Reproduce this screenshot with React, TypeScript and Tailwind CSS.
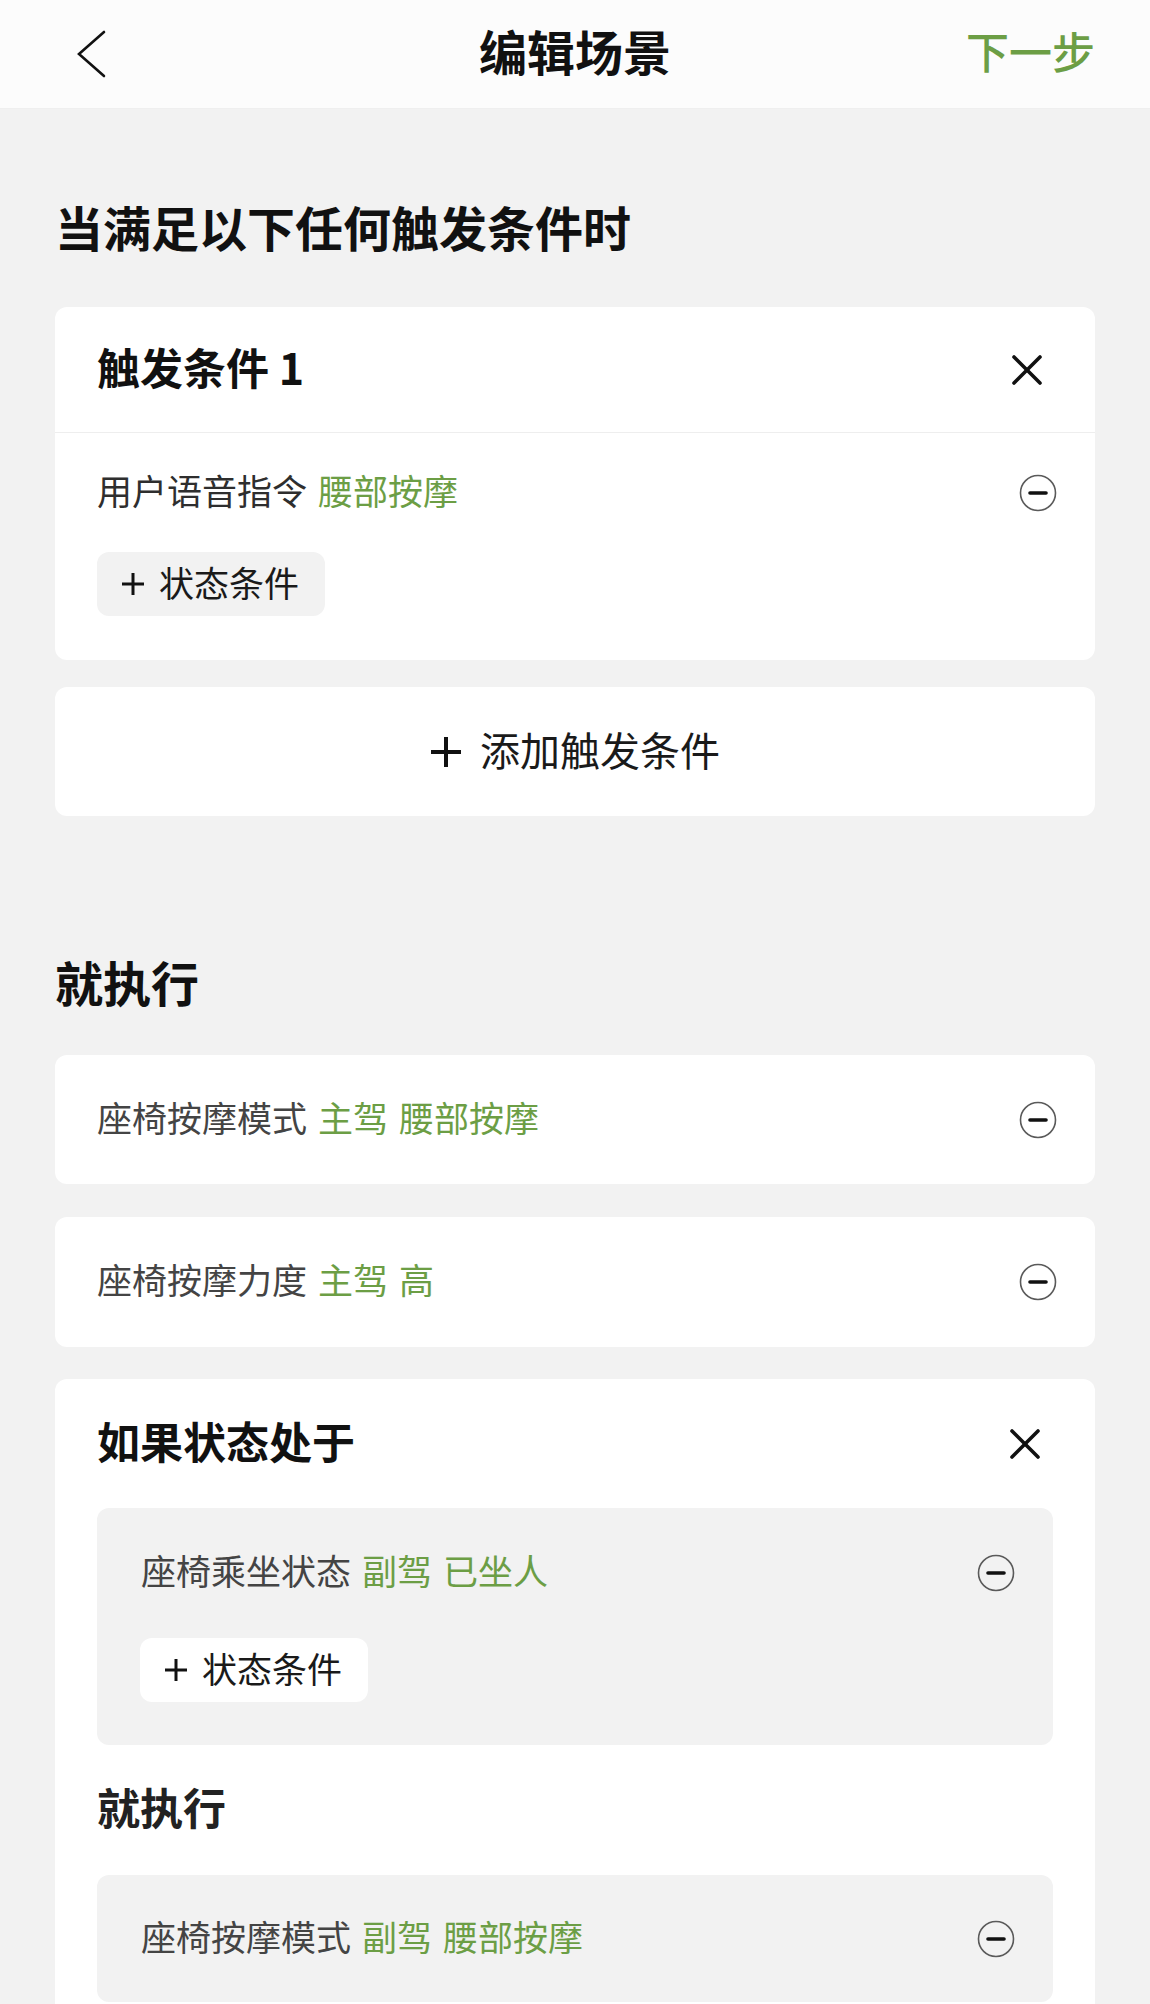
import React from "react";

const FONT = { fontFamily: '"Noto Sans CJK SC", "Noto Sans", sans-serif' };

function MinusCircle() {
  return (
    <svg width="38" height="38" viewBox="0 0 38 38" className="shrink-0">
      <circle cx="19" cy="19" r="17.5" fill="none" stroke="#5a5a5a" strokeWidth="1.6" />
      <line x1="11" y1="19" x2="27" y2="19" stroke="#111" strokeWidth="3.6" strokeLinecap="round" />
    </svg>
  );
}

function CloseX() {
  return (
    <svg width="32" height="32" viewBox="0 0 32 32" className="shrink-0">
      <line x1="3" y1="3" x2="29" y2="29" stroke="#111" strokeWidth="3.6" strokeLinecap="round" />
      <line x1="29" y1="3" x2="3" y2="29" stroke="#111" strokeWidth="3.6" strokeLinecap="round" />
    </svg>
  );
}

function Plus({ size, stroke }: { size: number; stroke: number }) {
  return (
    <svg width={size} height={size} viewBox={`0 0 ${size} ${size}`} className="shrink-0">
      <line x1={size / 2} y1="1" x2={size / 2} y2={size - 1} stroke="#111" strokeWidth={stroke} />
      <line x1="1" y1={size / 2} x2={size - 1} y2={size / 2} stroke="#111" strokeWidth={stroke} />
    </svg>
  );
}

function Row({ label, values, labelColor }: { label: string; values: string[]; labelColor: string }) {
  return (
    <div className="flex h-[38px] items-center justify-between">
      <div className="flex items-center pb-[7px] text-[35px] leading-none">
        <span className={labelColor}>{label}</span>
        {values.map((v, i) => (
          <span key={i} className="ml-[11px] text-[#6c9e45]">
            {v}
          </span>
        ))}
      </div>
      <MinusCircle />
    </div>
  );
}

function StateButton({ bg }: { bg: string }) {
  return (
    <div className={`flex h-[64px] w-[228px] items-center rounded-[12px] pl-[24px] ${bg}`}>
      <Plus size={24} stroke={3} />
      <span className="ml-[14px] pb-[6px] text-[35px] leading-none text-[#1a1a1a]">状态条件</span>
    </div>
  );
}

export default function App() {
  return (
    <div className="min-h-[2004px] w-[1150px] bg-[#f2f2f2]" style={FONT}>
      {/* Header */}
      <div className="grid h-[109px] grid-cols-[1fr_auto_1fr] items-center border-b border-[#efefef] bg-[#fcfcfc]">
        <div className="pl-[76px]">
          <svg width="30" height="48" viewBox="0 0 30 48">
            <polyline points="28,2 3,24 28,46" fill="none" stroke="#111" strokeWidth="2.6" strokeLinecap="round" strokeLinejoin="miter" />
          </svg>
        </div>
        <div className="pb-[8px] text-[48px] font-bold leading-none text-[#111]">编辑场景</div>
        <div className="flex justify-end pb-[8px] pr-[55px] text-[43px] font-medium leading-none text-[#6c9e45]">下一步</div>
      </div>

      <div className="px-[55px]">
        {/* Title */}
        <div className="mt-[92px] flex h-[60px] items-center pb-[10px] text-[48px] font-bold leading-none text-[#111]">
          当满足以下任何触发条件时
        </div>

        {/* Trigger card */}
        <div className="mt-[46px] rounded-[12px] bg-white">
          <div className="flex h-[125px] items-center justify-between pl-[42px] pr-[52px]">
            <span className="pb-[6px] text-[43px] font-bold leading-none text-[#111]">触发条件 1</span>
            <CloseX />
          </div>
          <div className="h-[1px] bg-[#eeeeee]" />
          <div className="px-[42px] pb-[44px] pr-[38px] pt-[41px]">
            <Row label="用户语音指令" values={["腰部按摩"]} labelColor="text-[#2e2e2e]" />
            <div className="mt-[40px]">
              <StateButton bg="bg-[#f2f2f2]" />
            </div>
          </div>
        </div>

        {/* Add trigger */}
        <div className="mt-[27px] flex h-[129px] items-center justify-center rounded-[12px] bg-white">
          <Plus size={32} stroke={4} />
          <span className="ml-[18px] pb-[6px] text-[40px] leading-none text-[#1a1a1a]">添加触发条件</span>
        </div>

        {/* Execute heading */}
        <div className="mt-[140px] flex h-[60px] items-center pb-[10px] text-[48px] font-bold leading-none text-[#111]">
          就执行
        </div>

        <div className="mt-[39px] flex h-[129px] flex-col justify-center rounded-[12px] bg-white pl-[42px] pr-[38px]">
          <Row label="座椅按摩模式" values={["主驾", "腰部按摩"]} labelColor="text-[#444]" />
        </div>

        <div className="mt-[33px] flex h-[130px] flex-col justify-center rounded-[12px] bg-white pl-[42px] pr-[38px]">
          <Row label="座椅按摩力度" values={["主驾", "高"]} labelColor="text-[#444]" />
        </div>

        {/* Conditional card */}
        <div className="mt-[32px] rounded-[12px] bg-white px-[42px] pb-[42px]">
          <div className="flex h-[129px] items-center justify-between pr-[12px]">
            <span className="pb-[6px] text-[43px] font-bold leading-none text-[#111]">如果状态处于</span>
            <CloseX />
          </div>
          <div className="rounded-[12px] bg-[#f2f2f2] pb-[43px] pl-[44px] pr-[38px] pt-[46px]">
            <Row label="座椅乘坐状态" values={["副驾", "已坐人"]} labelColor="text-[#444]" />
            <div className="-ml-[1px] mt-[46px]">
              <StateButton bg="bg-white" />
            </div>
          </div>
          <div className="mt-[35px] flex h-[60px] items-center pb-[8px] text-[43px] font-bold leading-none text-[#222]">
            就执行
          </div>
          <div className="mt-[35px] flex h-[127px] flex-col justify-center rounded-[12px] bg-[#f2f2f2] pl-[44px] pr-[38px]">
            <Row label="座椅按摩模式" values={["副驾", "腰部按摩"]} labelColor="text-[#444]" />
          </div>
        </div>
      </div>
    </div>
  );
}
